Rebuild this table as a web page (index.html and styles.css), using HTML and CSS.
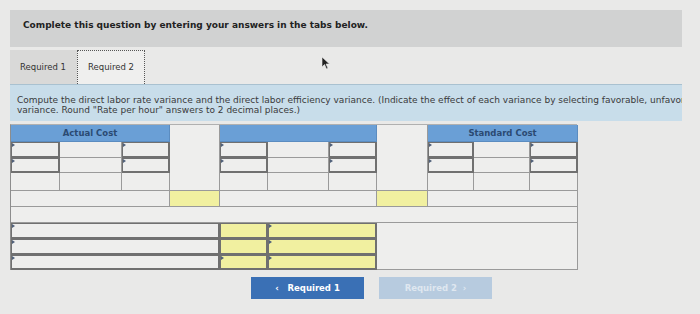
FILE: index.html
```html
<!DOCTYPE HTML>
<html>

<head>
    <meta charset="utf-8">
    <link rel="stylesheet" href="styles.css">
</head>

<body>
    <div class="banner">Complete this question by entering your answers in the tabs below.</div>

    <div class="tabs">
        <div class="tab">Required 1</div>
        <div class="tab active">Required 2</div>
        <svg class="pointer" width="9" height="14" viewBox="0 0 9 14">
            <path d="M1 1 L1 11 L3.5 8.5 L5.5 13 L7 12.3 L5 8 L8.5 8 Z" fill="#222" stroke="#eee" stroke-width="0.6"/>
        </svg>
    </div>

    <div class="prompt">
        Compute the direct labor rate variance and the direct labor efficiency variance. (Indicate the effect of each variance by selecting favorable, unfavorable,<br>
        variance. Round "Rate per hour" answers to 2 decimal places.)
    </div>

    <div class="sheet">
        <!-- header -->
        <div class="cell head" style="grid-area: 1 / 1 / 2 / 4">Actual Cost</div>
        <div class="cell" style="grid-area: 1 / 4 / 5 / 5"></div>
        <div class="cell head" style="grid-area: 1 / 5 / 2 / 8"></div>
        <div class="cell" style="grid-area: 1 / 8 / 5 / 9"></div>
        <div class="cell head" style="grid-area: 1 / 9 / 2 / 12">Standard Cost</div>

        <!-- quantity / rate rows -->
        <div class="cell input pick" style="grid-area: 2 / 1"></div>
        <div class="cell" style="grid-area: 2 / 2"></div>
        <div class="cell input pick" style="grid-area: 2 / 3"></div>
        <div class="cell input pick" style="grid-area: 2 / 5"></div>
        <div class="cell" style="grid-area: 2 / 6"></div>
        <div class="cell input pick" style="grid-area: 2 / 7"></div>
        <div class="cell input pick" style="grid-area: 2 / 9"></div>
        <div class="cell" style="grid-area: 2 / 10"></div>
        <div class="cell input pick" style="grid-area: 2 / 11"></div>

        <div class="cell input pick" style="grid-area: 3 / 1"></div>
        <div class="cell" style="grid-area: 3 / 2"></div>
        <div class="cell input pick" style="grid-area: 3 / 3"></div>
        <div class="cell input pick" style="grid-area: 3 / 5"></div>
        <div class="cell" style="grid-area: 3 / 6"></div>
        <div class="cell input pick" style="grid-area: 3 / 7"></div>
        <div class="cell input pick" style="grid-area: 3 / 9"></div>
        <div class="cell" style="grid-area: 3 / 10"></div>
        <div class="cell input pick" style="grid-area: 3 / 11"></div>

        <div class="cell" style="grid-area: 4 / 1"></div>
        <div class="cell" style="grid-area: 4 / 2"></div>
        <div class="cell" style="grid-area: 4 / 3"></div>
        <div class="cell" style="grid-area: 4 / 5"></div>
        <div class="cell" style="grid-area: 4 / 6"></div>
        <div class="cell" style="grid-area: 4 / 7"></div>
        <div class="cell" style="grid-area: 4 / 9"></div>
        <div class="cell" style="grid-area: 4 / 10"></div>
        <div class="cell" style="grid-area: 4 / 11"></div>

        <!-- totals -->
        <div class="cell" style="grid-area: 5 / 1 / 6 / 4"></div>
        <div class="cell hint" style="grid-area: 5 / 4"></div>
        <div class="cell" style="grid-area: 5 / 5 / 6 / 8"></div>
        <div class="cell hint" style="grid-area: 5 / 8"></div>
        <div class="cell" style="grid-area: 5 / 9 / 6 / 12"></div>

        <div class="cell" style="grid-area: 6 / 1 / 7 / 12"></div>

        <!-- variances -->
        <div class="cell input pick" style="grid-area: 7 / 1 / 8 / 5"></div>
        <div class="cell input hint" style="grid-area: 7 / 5"></div>
        <div class="cell input hint pick" style="grid-area: 7 / 6 / 8 / 8"></div>

        <div class="cell input pick" style="grid-area: 8 / 1 / 9 / 5"></div>
        <div class="cell input hint" style="grid-area: 8 / 5"></div>
        <div class="cell input hint pick" style="grid-area: 8 / 6 / 9 / 8"></div>

        <div class="cell input pick" style="grid-area: 9 / 1 / 10 / 5"></div>
        <div class="cell input hint pick" style="grid-area: 9 / 5"></div>
        <div class="cell input hint pick" style="grid-area: 9 / 6 / 10 / 8"></div>

        <div class="cell" style="grid-area: 7 / 8 / 10 / 12"></div>
    </div>

    <div class="nav">
        <button class="step">&lsaquo;&nbsp;&nbsp; Required 1</button>
        <button class="step off">Required 2 &nbsp;&rsaquo;</button>
    </div>
</body>

</html>
```

FILE: styles.css
```css
/* page */

body {
    margin: 0;
    padding: 10px 0 0 10px;
    background: #e9e9e8;
    font-family: "DejaVu Sans", Verdana, sans-serif;
    color: #333;
    overflow: hidden;
}

.banner {
    width: 659px;
    height: 37px;
    padding-left: 13px;
    box-sizing: content-box;
    background: #d1d2d2;
    font-size: 9px;
    font-weight: bold;
    color: #222;
    line-height: 30px;
}

/* tabs */

.tabs {
    display: flex;
    margin-top: 3px;
    height: 34px;
    position: relative;
}

.tab {
    width: 67px;
    padding-left: 10px;
    box-sizing: border-box;
    background: #d9d9d8;
    font-size: 8.5px;
    line-height: 34px;
    color: #333;
}

.tab.active {
    width: 68px;
    padding-left: 10px;
    background: #efefee;
    border: 1px dotted #555;
    border-bottom: none;
    line-height: 32px;
}

.pointer {
    position: absolute;
    left: 311px;
    top: 6px;
}

/* instructions */

.prompt {
    width: 672px;
    height: 37px;
    box-sizing: border-box;
    padding: 10px 0 0 7px;
    background: #c8ddea;
    border-top: 1px solid #a9c1d0;
    font-size: 9px;
    line-height: 10px;
    color: #3a3a3a;
    white-space: nowrap;
    overflow: hidden;
}

/* worksheet grid */

.sheet {
    display: grid;
    grid-template-columns: 49px 62px 48px 50px 48px 61px 48px 51px 46px 56px 48px;
    grid-template-rows: 17px 16px 15px 18px 16px 16px 16px 16px 15px;
    width: 567px;
    margin-top: 3px;
    border-left: 1px solid #8d8d8d;
    border-top: 1px solid #b0b0b0;
    box-sizing: border-box;
}

.cell {
    background: #eeeeed;
    border-right: 1px solid #9a9a9a;
    border-bottom: 1px solid #9a9a9a;
    box-sizing: border-box;
    position: relative;
}

.head {
    background: #6a9fd6;
    border-color: #5b8cc0;
    font-size: 8.5px;
    font-weight: bold;
    color: #2b4a72;
    text-align: center;
    line-height: 16px;
}

.input {
    border-right: 2px solid #707070;
    border-bottom: 2px solid #707070;
    box-shadow: inset 1px 1px 0 #707070;
}

.hint {
    background: #f1f0a0;
}

/* little corner marker on dropdown cells */
.pick::before {
    content: "";
    position: absolute;
    left: 1px;
    top: 1px;
    border-left: 3px solid #50607a;
    border-top: 2px solid transparent;
    border-bottom: 2px solid transparent;
}

/* step buttons */

.nav {
    display: flex;
    gap: 15px;
    margin: 7px 0 0 241px;
}

.step {
    width: 113px;
    height: 22px;
    border: none;
    background: #3a70b5;
    color: #fff;
    font-family: "DejaVu Sans", Verdana, sans-serif;
    font-size: 8.5px;
    font-weight: bold;
    padding: 0;
}

.step.off {
    background: #b7cbdf;
    color: #dfe7f0;
}
```
